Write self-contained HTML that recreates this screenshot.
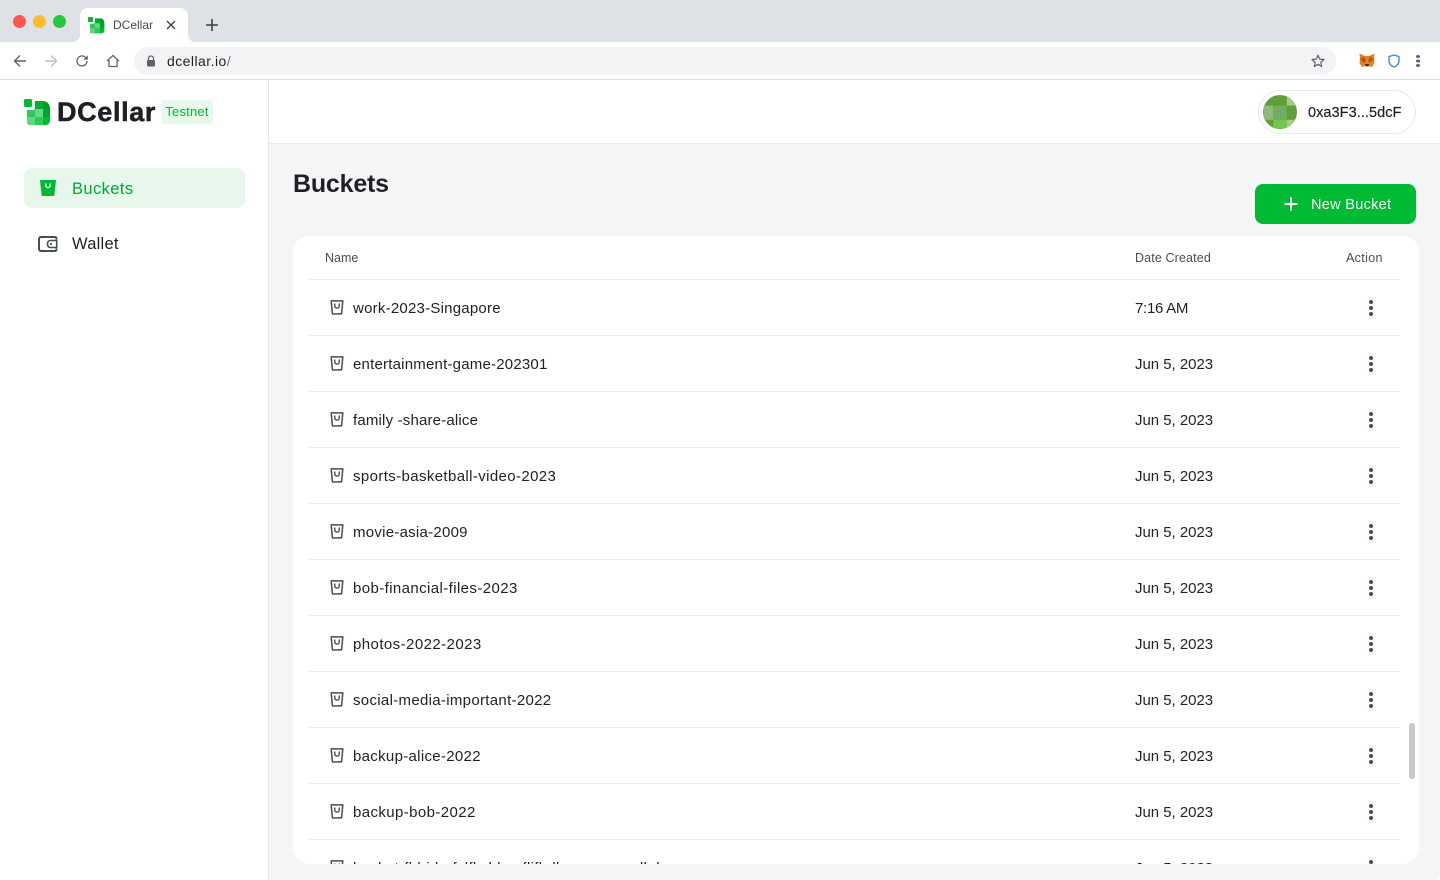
<!DOCTYPE html>
<html lang="en"><head><meta charset="utf-8"><title>DCellar</title>
<style>
html,body{margin:0;padding:0;background:#fff}
body{width:1440px;height:880px;position:relative;overflow:hidden;font-family:"Liberation Sans",sans-serif;color:#1e2026}
.a{position:absolute;white-space:nowrap}
.tabbar{left:0;top:0;width:1440px;height:42px;background:#dee1e6}
.dot{width:13px;height:13px;border-radius:50%;top:15px}
.tab{left:80px;top:8px;width:108px;height:34px;background:#fff;border-radius:8px 8px 0 0}
.fl{width:8px;height:8px;top:34px}
.toolbar{left:0;top:42px;width:1440px;height:37px;background:#fff;border-bottom:1px solid #dadce0}
.url{left:134px;top:47px;width:1202px;height:28px;border-radius:14px;background:#f1f3f4}
.side{left:0;top:80px;width:268px;height:800px;background:#fff;border-right:1px solid #e6e8ea}
.top{left:269px;top:80px;width:1171px;height:63px;background:#fff;border-bottom:1px solid #e6e8ea}
.main{left:269px;top:144px;width:1171px;height:736px;background:#f5f5f5;border-bottom-right-radius:6px}
.card{left:293px;top:236px;width:1126px;height:628px;background:#fff;border-radius:16px;overflow:hidden}
.r{position:absolute;left:16px;width:1090px;height:55px;border-bottom:1px solid #e6e8ea}
.r svg{position:absolute;left:20px;top:19px}
.n{position:absolute;left:44px;top:1px;line-height:55px;font-size:15px;color:#1e2026;white-space:nowrap}
.d{position:absolute;left:826px;top:1px;line-height:55px;font-size:15px;letter-spacing:-.03px;color:#1e2026;white-space:nowrap}
.m{position:absolute;left:1060px;top:20px;width:4px;height:4px;border-radius:50%;background:#474d57;box-shadow:0 6px 0 #474d57,0 12px 0 #474d57}
.h{font-size:12.5px;color:#474d57;line-height:16px;top:14px}
</style></head><body>
<svg width="0" height="0" style="position:absolute"><defs>
<symbol id="b" viewBox="0 0 16 16"><path d="M2.2 1.4H13.8L12.6 14.4H3.4Z" fill="none" stroke="#474d57" stroke-width="1.5" stroke-linejoin="round"/><path d="M5.8 4.6V6.4a2.2 2.2 0 0 0 4.4 0V4.6" fill="none" stroke="#474d57" stroke-width="1.4" stroke-linecap="round"/></symbol>
<clipPath id="lc"><path d="M11 2H18C23 2 26 5 26 10V21C26 24 24 26 21 26H6C4 26 3 25 3 23V11H9C10 11 11 10 11 9Z"/></clipPath>
<symbol id="logo" viewBox="0 0 27 27">
<rect x="0" y="0" width="8" height="8" rx="1.5" fill="#00ba34"/>
<g clip-path="url(#lc)"><rect x="0" y="0" width="27" height="27" fill="#00ba34"/>
<rect x="11" y="2" width="8" height="9" fill="#02ad30"/><rect x="19" y="2" width="8" height="9" fill="#029c2b"/>
<rect x="3" y="10" width="8" height="8" fill="#2fcb5a"/><rect x="11" y="10" width="8" height="8" fill="#62d984"/><rect x="19" y="10" width="8" height="8" fill="#02a32e"/>
<rect x="3" y="18" width="8" height="9" fill="#5fd880"/><rect x="11" y="18" width="8" height="9" fill="#2fcb5a"/><rect x="19" y="18" width="8" height="9" fill="#00ba34"/></g>
</symbol>
</defs></svg>

<div class="a tabbar"></div>
<div class="a dot" style="left:13px;background:#fc5753"></div>
<div class="a dot" style="left:33px;background:#fdbc2e"></div>
<div class="a dot" style="left:53px;background:#27c840"></div>
<div class="a tab"></div>
<div class="a fl" style="left:72px;background:radial-gradient(circle at 0 0,#dee1e6 8px,#fff 8.5px)"></div>
<div class="a fl" style="left:188px;background:radial-gradient(circle at 100% 0,#dee1e6 8px,#fff 8.5px)"></div>
<svg class="a" style="left:88px;top:17px" width="17" height="17" viewBox="0 0 27 27"><use href="#logo" width="27" height="27"/></svg>
<div class="a" style="left:113px;top:17px;font-size:12px;line-height:16px;color:#45484d">DCellar</div>
<svg class="a" style="left:166px;top:20px" width="10" height="10" viewBox="0 0 10 10"><path d="M1 1L9 9M9 1L1 9" stroke="#3c4043" stroke-width="1.3"/></svg>
<svg class="a" style="left:205px;top:18px" width="14" height="14" viewBox="0 0 14 14"><path d="M7 1V13M1 7H13" stroke="#3c4043" stroke-width="1.6"/></svg>

<div class="a toolbar"></div>
<svg class="a" style="left:13px;top:54px" width="14" height="14" viewBox="0 0 14 14"><path d="M13 7H2M7 1.5L1.5 7L7 12.5" fill="none" stroke="#5f6368" stroke-width="1.4"/></svg>
<svg class="a" style="left:44px;top:54px" width="14" height="14" viewBox="0 0 14 14"><path d="M1 7H12M7 1.5L12.5 7L7 12.5" fill="none" stroke="#bdc1c6" stroke-width="1.4"/></svg>
<svg class="a" style="left:75px;top:54px" width="14" height="14" viewBox="0 0 14 14"><path d="M12 7a5 5 0 1 1-1.6-3.7L12.5 5.2" fill="none" stroke="#5f6368" stroke-width="1.3"/><path d="M12.8 1.2V5.6H8.4Z" fill="#5f6368"/></svg>
<svg class="a" style="left:106px;top:54px" width="14" height="14" viewBox="0 0 14 14"><path d="M1 7L7 1.5L13 7M3 6V12.5H11V6" fill="none" stroke="#5f6368" stroke-width="1.3"/></svg>
<div class="a url"></div>
<svg class="a" style="left:146px;top:55px" width="10" height="12" viewBox="0 0 10 12"><path d="M2.5 5V3.5a2.5 2.5 0 0 1 5 0V5" fill="none" stroke="#5f6368" stroke-width="1.2"/><rect x="1" y="5" width="8" height="6.5" rx="1" fill="#5f6368"/></svg>
<div class="a" style="left:167px;top:52px;font-size:14px;line-height:18px;letter-spacing:.45px;color:#202124">dcellar.io<span style="color:#70757a">/</span></div>
<svg class="a" style="left:1311px;top:54px" width="14" height="14" viewBox="0 0 14 14"><path d="M7 1.2L8.7 5.1L13 5.5L9.8 8.3L10.7 12.5L7 10.3L3.3 12.5L4.2 8.3L1 5.5L5.3 5.1Z" fill="none" stroke="#5f6368" stroke-width="1.2" stroke-linejoin="round"/></svg>
<svg class="a" style="left:1359px;top:53px" width="16" height="15" viewBox="0 0 16 15"><path d="M.5.5L6 3H10L15.5.5L15 6L15.5 10L13 14L10 13.2H6L3 14L.5 10L1 6Z" fill="#e8821e"/><path d="M1 6L5 3.5L7 8L5 10ZM15 6L11 3.5L9 8L11 10Z" fill="#b8570f"/><path d="M6 11H10L9.5 13.2H6.5Z" fill="#3a2a1e"/></svg>
<svg class="a" style="left:1388px;top:54px" width="12" height="14" viewBox="0 0 12 14"><path d="M6 1L11 2.6V6.5C11 10 8.8 12 6 13C3.2 12 1 10 1 6.5V2.6Z" fill="none" stroke="#3f8fdb" stroke-width="1.4" stroke-linejoin="round"/></svg>
<div class="a" style="left:1416px;top:55px;width:4px;height:3px;border-radius:50%;background:#5f6368;box-shadow:0 4.5px 0 #5f6368,0 9px 0 #5f6368"></div>

<div class="a side"></div>
<div class="a top"></div>
<div class="a main"></div>

<svg class="a" style="left:24px;top:99px" width="27" height="27" viewBox="0 0 27 27"><use href="#logo" width="27" height="27"/></svg>
<div class="a" style="left:57px;top:96px;font-size:27px;line-height:32px;font-weight:700;letter-spacing:.65px;color:#1e2026;-webkit-text-stroke:.5px #1e2026">DCellar</div>
<div class="a" style="left:161px;top:100px;width:52px;height:24px;background:#e7f8ec;border-radius:3px;color:#00ba34;font-size:13px;line-height:24px;letter-spacing:.2px;text-align:center">Testnet</div>

<div class="a" style="left:24px;top:168px;width:221px;height:40px;background:#e7f7ec;border-radius:8px"></div>
<svg class="a" style="left:39px;top:179px" width="18" height="18" viewBox="0 0 18 18"><path d="M1.5 1.5H16.5L14.8 16.5H3.2Z" fill="#00ba34" stroke="#00ba34" stroke-linejoin="round"/><path d="M7 5V6.6a2 2 0 0 0 4 0V5" fill="none" stroke="#e7f7ec" stroke-width="1.4" stroke-linecap="round"/></svg>
<div class="a" style="left:72px;top:179px;font-size:16.5px;line-height:20px;letter-spacing:.4px;color:#00a92f">Buckets</div>
<svg class="a" style="left:38px;top:236px" width="20" height="16" viewBox="0 0 20 16"><path d="M18.5 3.5V2.6C18.5 1.7 17.8 1 17 1H3C1.9 1 1 1.9 1 3V13C1 14.1 1.9 15 3 15H17C17.8 15 18.5 14.3 18.5 13.4V12.5" fill="none" stroke="#474d57" stroke-width="2"/><path d="M18.7 4.5H12.5C10.5 4.5 9.5 6 9.5 8S10.5 11.5 12.5 11.5H18.7Z" fill="none" stroke="#474d57" stroke-width="1.6"/><circle cx="13" cy="8" r="1.1" fill="#474d57"/></svg>
<div class="a" style="left:72px;top:234px;font-size:16.5px;line-height:20px;letter-spacing:.25px;color:#1e2026">Wallet</div>

<div class="a" style="left:1258px;top:90px;width:156px;height:42px;border:1px solid #e6e8ea;border-radius:22px;background:#fff"></div>
<svg class="a" style="left:1263px;top:95px" width="34" height="34" viewBox="0 0 5 5"><defs><clipPath id="c"><circle cx="2.5" cy="2.5" r="2.5"/></clipPath></defs><g clip-path="url(#c)">
<rect width="5" height="5" fill="#5f9f36"/>
<rect x="3.5" y="0" width="1.5" height="1.55" fill="#9dce83"/>
<rect x="0" y="1.55" width="1.5" height="2.1" fill="#8cbd78"/><rect x="1.5" y="1.55" width="2" height="2.1" fill="#72ad63"/>
<rect x="1.5" y="3.65" width="2" height="1.35" fill="#75c551"/><rect x="3.5" y="3.65" width="1.5" height="1.35" fill="#9dce83"/>
</g></svg>
<div class="a" style="left:1308px;top:104px;font-size:14.5px;line-height:18px;letter-spacing:.06px;color:#1e2026;-webkit-text-stroke:.2px #1e2026">0xa3F3...5dcF</div>

<div class="a" style="left:293px;top:168px;font-size:25px;line-height:32px;font-weight:700;letter-spacing:-.2px;color:#1e2026">Buckets</div>
<div class="a" style="left:1255px;top:184px;width:161px;height:40px;background:#00ba34;border-radius:8px"></div>
<svg class="a" style="left:1283px;top:196px" width="16" height="16" viewBox="0 0 16 16"><path d="M8 1.5V14.5M1.5 8H14.5" stroke="#fff" stroke-width="2"/></svg>
<div class="a" style="left:1311px;top:196px;font-size:14.5px;line-height:18px;letter-spacing:.3px;color:#fff">New Bucket</div>

<div class="a card">
<div class="a h" style="left:32px">Name</div>
<div class="a h" style="left:842px;letter-spacing:.13px">Date Created</div>
<div class="a h" style="left:1053px;letter-spacing:.35px">Action</div>
<div style="position:absolute;left:16px;top:43px;width:1090px;height:1px;background:#e6e8ea"></div>
<div class="r" style="top:44px"><svg width="16" height="17"><use href="#b" width="16" height="17"/></svg><span class="n" style="letter-spacing:.23px">work-2023-Singapore</span><span class="d" style="letter-spacing:-.28px">7:16 AM</span><i class="m"></i></div>
<div class="r" style="top:100px"><svg width="16" height="17"><use href="#b" width="16" height="17"/></svg><span class="n" style="letter-spacing:.21px">entertainment-game-202301</span><span class="d">Jun 5, 2023</span><i class="m"></i></div>
<div class="r" style="top:156px"><svg width="16" height="17"><use href="#b" width="16" height="17"/></svg><span class="n" style="letter-spacing:.18px">family -share-alice</span><span class="d">Jun 5, 2023</span><i class="m"></i></div>
<div class="r" style="top:212px"><svg width="16" height="17"><use href="#b" width="16" height="17"/></svg><span class="n" style="letter-spacing:.38px">sports-basketball-video-2023</span><span class="d">Jun 5, 2023</span><i class="m"></i></div>
<div class="r" style="top:268px"><svg width="16" height="17"><use href="#b" width="16" height="17"/></svg><span class="n" style="letter-spacing:.26px">movie-asia-2009</span><span class="d">Jun 5, 2023</span><i class="m"></i></div>
<div class="r" style="top:324px"><svg width="16" height="17"><use href="#b" width="16" height="17"/></svg><span class="n" style="letter-spacing:.4px">bob-financial-files-2023</span><span class="d">Jun 5, 2023</span><i class="m"></i></div>
<div class="r" style="top:380px"><svg width="16" height="17"><use href="#b" width="16" height="17"/></svg><span class="n" style="letter-spacing:.43px">photos-2022-2023</span><span class="d">Jun 5, 2023</span><i class="m"></i></div>
<div class="r" style="top:436px"><svg width="16" height="17"><use href="#b" width="16" height="17"/></svg><span class="n" style="letter-spacing:.31px">social-media-important-2022</span><span class="d">Jun 5, 2023</span><i class="m"></i></div>
<div class="r" style="top:492px"><svg width="16" height="17"><use href="#b" width="16" height="17"/></svg><span class="n" style="letter-spacing:.31px">backup-alice-2022</span><span class="d">Jun 5, 2023</span><i class="m"></i></div>
<div class="r" style="top:548px"><svg width="16" height="17"><use href="#b" width="16" height="17"/></svg><span class="n" style="letter-spacing:.4px">backup-bob-2022</span><span class="d">Jun 5, 2023</span><i class="m"></i></div>
<div class="r" style="top:604px;border:0"><svg width="16" height="17"><use href="#b" width="16" height="17"/></svg><span class="n" style="letter-spacing:.3px">bucket-fbl-ido-fslfksldsn-flifbdks-com-cmslkd</span><span class="d">Jun 5, 2023</span><i class="m"></i></div>
<div class="a" style="left:1116px;top:487px;width:6px;height:56px;border-radius:3px;background:#c9c9c9"></div>
</div>
</body></html>
